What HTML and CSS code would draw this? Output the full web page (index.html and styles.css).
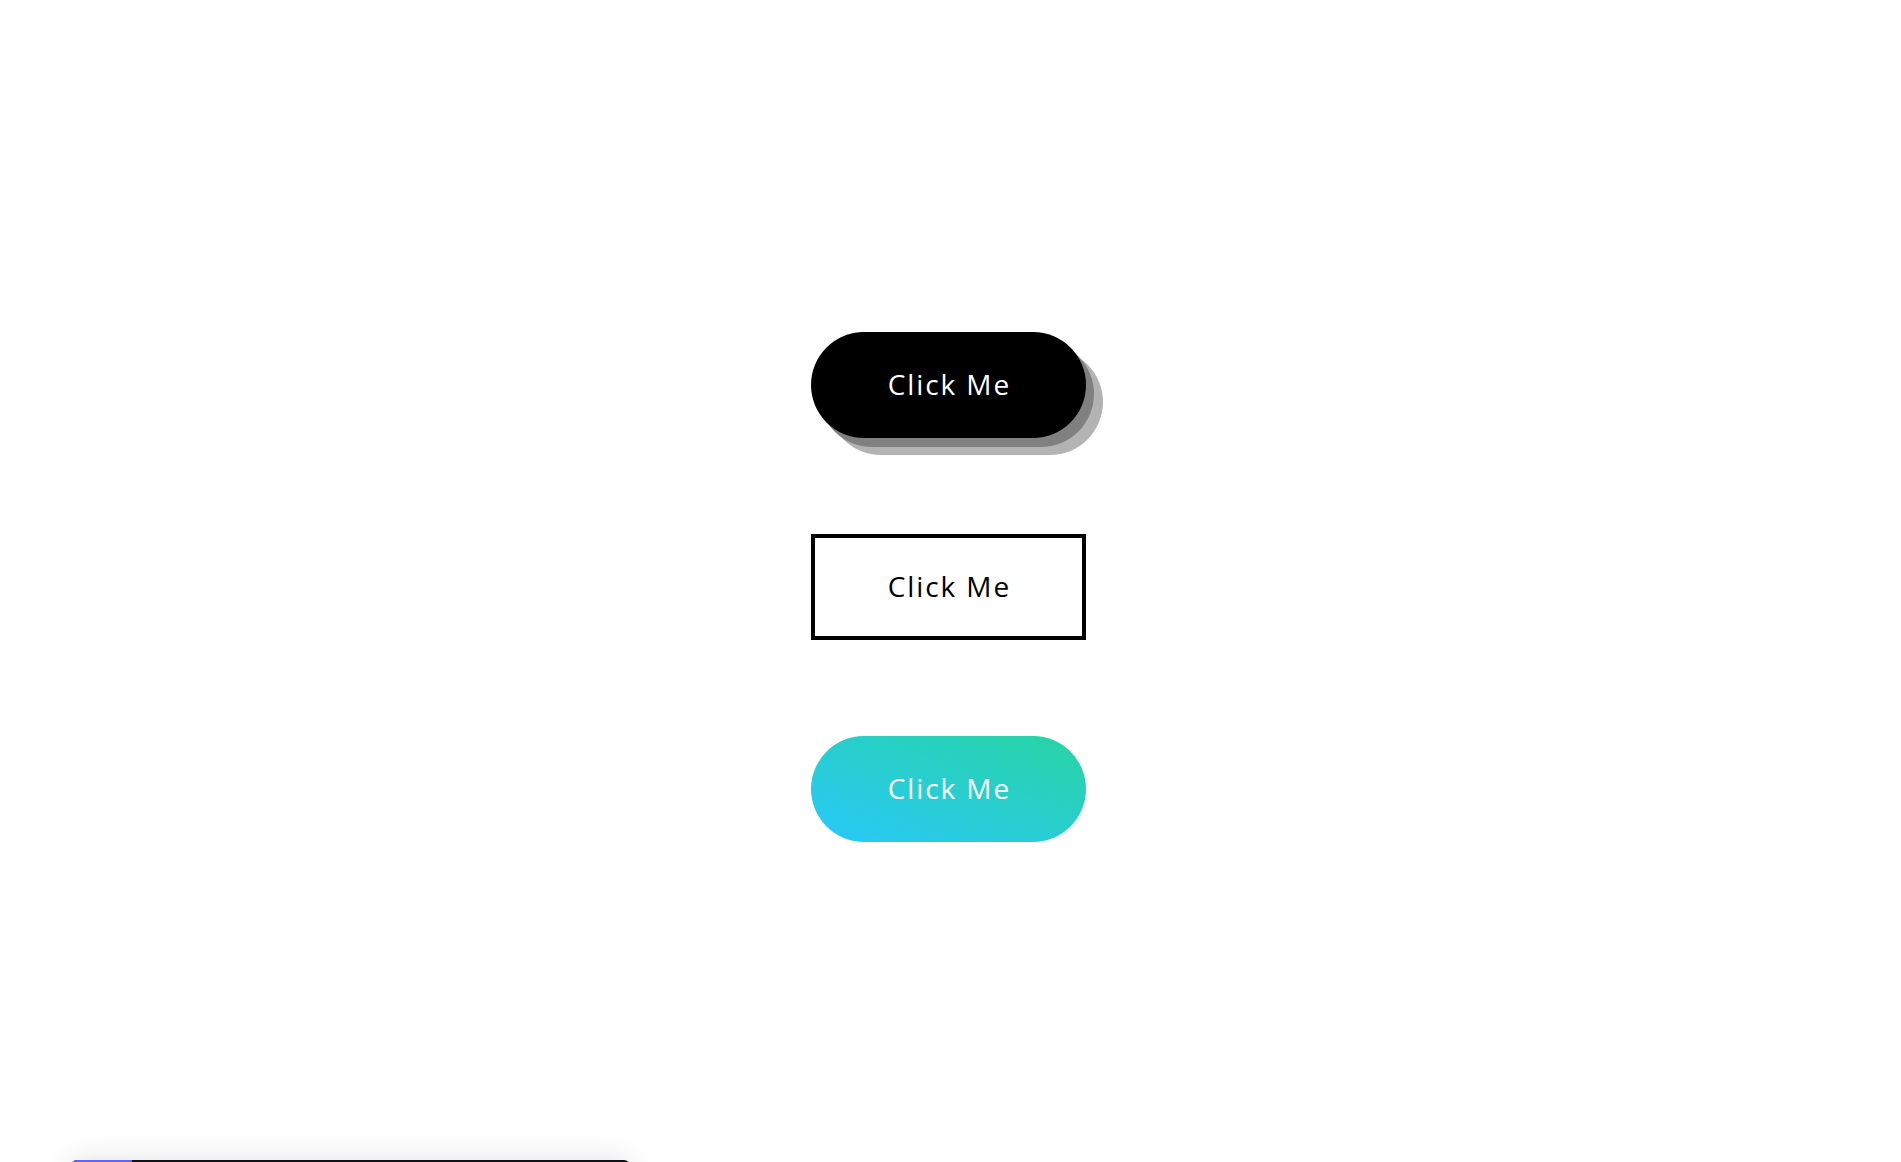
FILE: index.html
```html
<!DOCTYPE html>
<html lang="en">
<head>
<meta charset="utf-8">
<title>Buttons</title>
<link rel="stylesheet" href="styles.css">
</head>
<body>
<main class="stage">
  <button class="btn btn-shadow">Click Me</button>
  <button class="btn btn-outline">Click Me</button>
  <button class="btn btn-gradient">Click Me</button>
</main>
<div class="dock"><span class="dock-accent"></span></div>
</body>
</html>
```
FILE: styles.css
```css
html, body {
  margin: 0;
  height: 100%;
  overflow: hidden;
  background: #ffffff;
}
.stage {
  display: flex;
  flex-direction: column;
  align-items: center;
  gap: 96px;
  padding-top: 332px;
  padding-right: 4px;
}
.btn {
  width: 275px;
  height: 106px;
  box-sizing: border-box;
  font-family: "Open Sans", "Noto Sans", sans-serif;
  font-size: 28px;
  font-weight: 400;
  letter-spacing: 1.9px;
  text-indent: 1.9px;
  line-height: 1;
  border: none;
  padding: 0 0 3px;
  cursor: pointer;
}
.btn-shadow {
  background: #000000;
  color: #ffffff;
  border-radius: 53px;
  box-shadow: 8px 9px 0 #808080, 17px 17px 0 #b3b3b3;
}
.btn-outline {
  background: #ffffff;
  color: #000000;
  border: 4px solid #000000;
}
.btn-gradient {
  color: #ffffff;
  border-radius: 53px;
  background: linear-gradient(to top right, #29c9fa, #27d4a2);
}
.dock {
  position: fixed;
  left: 71px;
  top: 1160px;
  width: 559px;
  height: 60px;
  background: #111114;
  border-radius: 6px 6px 0 0;
  box-shadow: 0 0 30px rgba(0, 0, 0, 0.12);
  overflow: hidden;
}
.dock-accent {
  display: block;
  width: 61px;
  height: 100%;
  background: #6363ff;
}
```
